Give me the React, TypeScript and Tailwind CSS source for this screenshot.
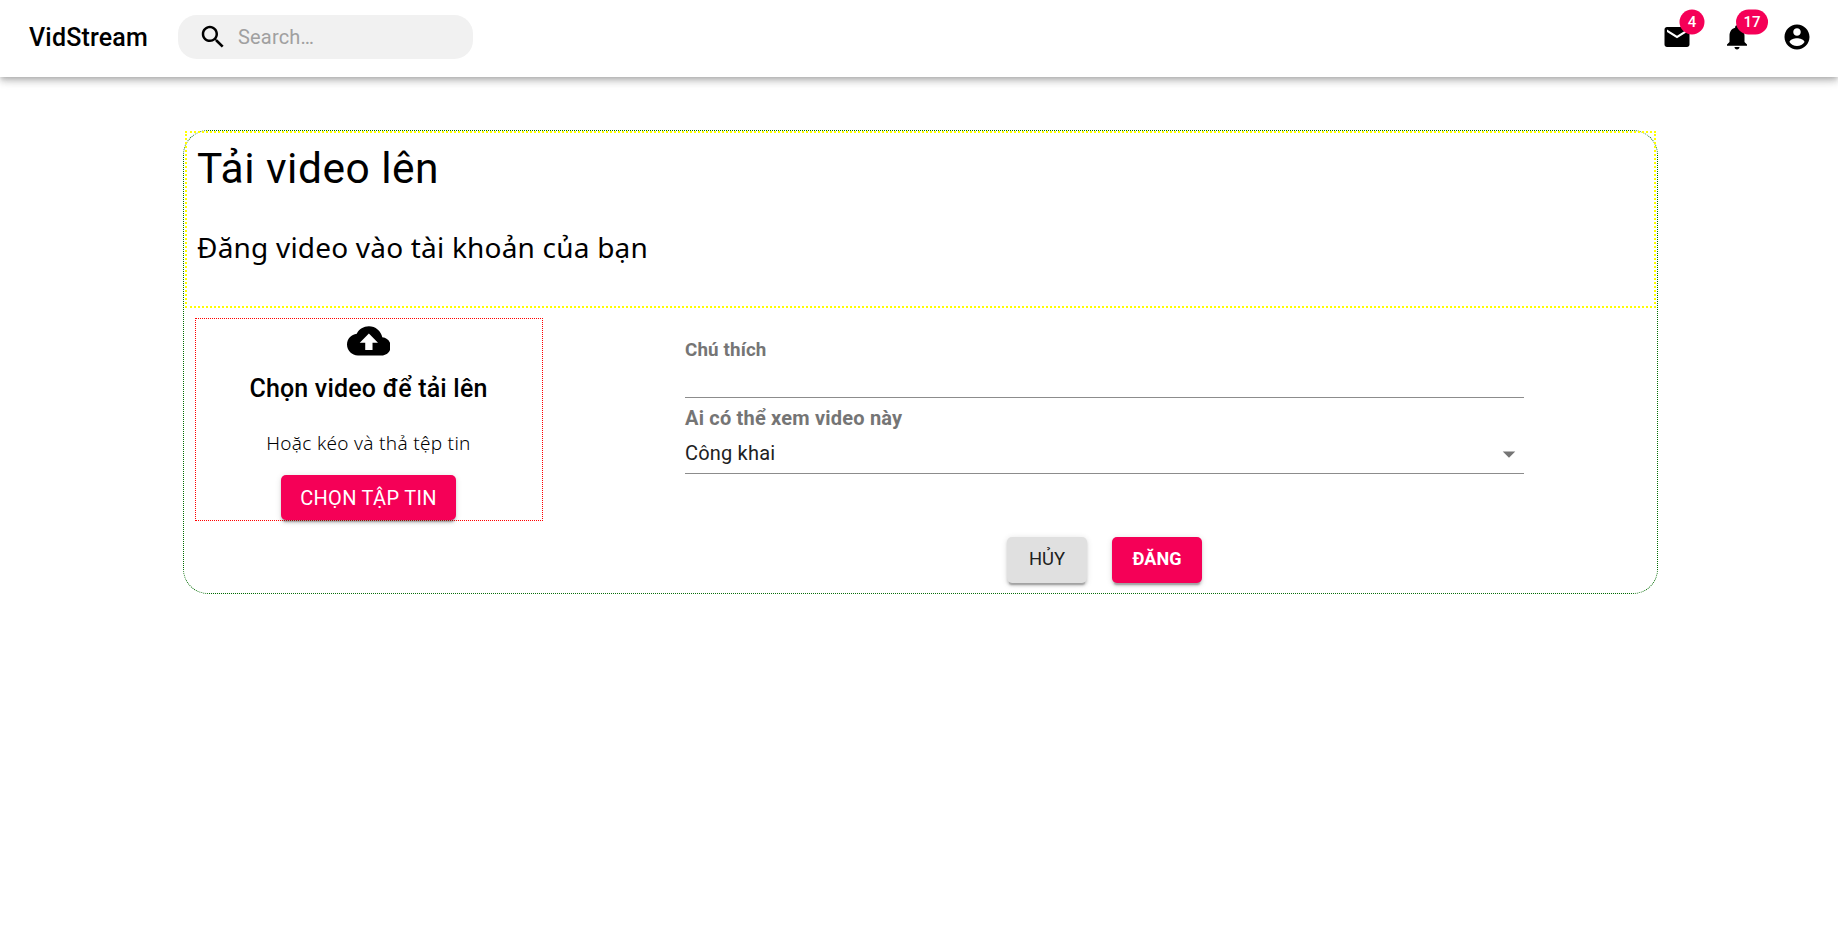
const RAISED =
  "shadow-[0_3.75px_1.25px_-2.5px_rgba(0,0,0,0.2),0_2.5px_2.5px_0_rgba(0,0,0,0.14),0_1.25px_6.25px_0_rgba(0,0,0,0.12)]";

function Icon({ d, className }: { d: string; className: string }) {
  return (
    <svg viewBox="0 0 24 24" fill="currentColor" className={className} aria-hidden="true">
      <path d={d} />
    </svg>
  );
}

function BadgedIcon({ d, count }: { d: string; count: number }) {
  return (
    <div className="relative size-[30px]">
      <Icon d={d} className="size-[30px]" />
      <span className="absolute top-0 right-0 flex h-[25px] min-w-[25px] translate-x-1/2 -translate-y-1/2 items-center justify-center rounded-full bg-[#f50057] px-[7.5px] text-[15px] leading-none font-medium text-white">
        {count}
      </span>
    </div>
  );
}

function Header() {
  return (
    <header className="relative flex h-[77px] items-start bg-white pt-[15px] pr-[26px] pl-[29px] shadow-[0_2.5px_5px_-1.25px_rgba(0,0,0,0.2),0_5px_6.25px_0_rgba(0,0,0,0.14),0_1.25px_12.5px_0_rgba(0,0,0,0.12)]">
      <div className="flex h-11 w-full items-center">
        <h1 className="w-[149px] pt-[2px] text-[25px] leading-[38px] font-medium tracking-[0.0075em]">VidStream</h1>
        <div className="flex h-11 w-[295px] items-center rounded-[18.75px] bg-[#f1f1f1] pl-5">
          <Icon
            className="size-[30px]"
            d="M15.5 14h-.79l-.28-.27C15.41 12.59 16 11.11 16 9.5 16 5.91 13.09 3 9.5 3S3 5.91 3 9.5 5.91 16 9.5 16c1.61 0 3.09-.59 4.23-1.57l.27.28v.79l5 4.99L20.49 19l-4.99-5zm-6 0C7.01 14 5 11.99 5 9.5S7.01 5 9.5 5 14 7.01 14 9.5 11.99 14 9.5 14z"
          />
          <input
            placeholder="Search…"
            className="ml-[10px] h-6 w-[200px] bg-transparent text-[20px] leading-6 tracking-[0.00938em] outline-none placeholder:text-[#a0a0a0]"
          />
        </div>
        <nav className="ml-auto flex gap-[30px]">
          <BadgedIcon
            count={4}
            d="M20 4H4c-1.1 0-1.99.9-1.99 2L2 18c0 1.1.9 2 2 2h16c1.1 0 2-.9 2-2V6c0-1.1-.9-2-2-2zm0 4l-8 5-8-5V6l8 5 8-5v2z"
          />
          <BadgedIcon
            count={17}
            d="M12 22c1.1 0 2-.9 2-2h-4c0 1.1.89 2 2 2zm6-6v-5c0-3.07-1.64-5.64-4.5-6.32V4c0-.83-.67-1.5-1.5-1.5s-1.5.67-1.5 1.5v.68C7.63 5.36 6 7.92 6 11v5l-2 2v1h16v-1l-2-2z"
          />
          <Icon
            className="size-[30px]"
            d="M12 2C6.48 2 2 6.48 2 12s4.48 10 10 10 10-4.48 10-10S17.52 2 12 2zm0 3c1.66 0 3 1.34 3 3s-1.34 3-3 3-3-1.34-3-3 1.34-3 3-3zm0 14.2c-2.5 0-4.71-1.28-6-3.22.03-1.99 4-3.08 6-3.08 1.99 0 5.97 1.09 6 3.08-1.29 1.94-3.5 3.22-6 3.22z"
          />
        </nav>
      </div>
    </header>
  );
}

function DropZone() {
  return (
    <section className="mt-[10px] flex h-[203px] w-[348px] flex-col items-center border border-dotted border-[red] pr-px">
      <Icon
        className="size-[43.75px]"
        d="M19.35 10.04C18.67 6.59 15.64 4 12 4 9.11 4 6.6 5.64 5.35 8.04 2.34 8.36 0 10.91 0 14c0 3.31 2.69 6 6 6h13c2.76 0 5-2.24 5-5 0-2.64-2.05-4.78-4.65-4.96zM14 13v4h-4v-4H7l5-5 5 5h-3z"
      />
      <h3 className="mt-[6.25px] text-[25px] leading-10 font-medium tracking-[0.0075em]">Chọn video để tải lên</h3>
      <p className="mt-[19px] font-['Noto_Sans',sans-serif] text-[19px] leading-[30px] font-light tracking-[0.3px]">
        Hoặc kéo và thả tệp tin
      </p>
      <button
        className={`mt-[17px] h-[45px] w-[175px] shrink-0 rounded-[5px] bg-[#f50057] text-[20px] leading-[46px] tracking-[0.3px] text-white ${RAISED}`}
      >
        CHỌN TẬP TIN
      </button>
    </section>
  );
}

function DetailsForm() {
  return (
    <section className="ml-[142px] flex w-[839px] flex-col text-[20px]">
      <label className="mt-[27px] text-[18.75px] leading-[30px] font-bold tracking-[0.15px] text-[#757575]">Chú thích</label>
      <input className="h-[33px] border-b border-[#8c8c8c] bg-transparent outline-none" />
      <label className="mt-[5px] leading-[30px] font-bold tracking-[0.2px] text-[#757575]">Ai có thể xem video này</label>
      <div className="mt-[5px] flex h-[36px] items-start justify-between border-b border-[#8c8c8c] text-[#212121]">
        <span className="leading-[30px] tracking-[0.00938em]">Công khai</span>
        <Icon className="mt-px size-[30px] text-[#757575]" d="M7 10l5 5 5-5z" />
      </div>
      <div className="mt-[63px] flex justify-center gap-[25px]">
        <button className={`h-[46px] w-[80px] rounded-[5px] bg-[#e0e0e0] pb-[2px] text-[18.4px] leading-[44px] text-[#212121] ${RAISED}`}>
          HỦY
        </button>
        <button className={`h-[46px] w-[90px] rounded-[5px] bg-[#f50057] pb-[2px] text-[18px] leading-[44px] font-bold text-white ${RAISED}`}>
          ĐĂNG
        </button>
      </div>
    </section>
  );
}

export default function App() {
  return (
    <div className="min-h-screen bg-white font-[Roboto,sans-serif] text-black">
      <Header />
      <main className="mt-[53px] ml-[183px] h-[464px] w-[1475px] rounded-[25px] border border-dotted border-[#006a00]">
        <div className="ml-px h-[177px] w-[1471px] border-2 border-dotted border-[yellow] pt-[6px] pl-[10px]">
          <h2 className="text-[42.5px] leading-[60px] tracking-[0.5px]">Tải video lên</h2>
          <p className="mt-[28px] font-['Noto_Sans',sans-serif] text-[28px] leading-10 tracking-[0.2px]">Đăng video vào tài khoản của bạn</p>
        </div>
        <div className="flex items-start pl-[11px]">
          <DropZone />
          <DetailsForm />
        </div>
      </main>
    </div>
  );
}
